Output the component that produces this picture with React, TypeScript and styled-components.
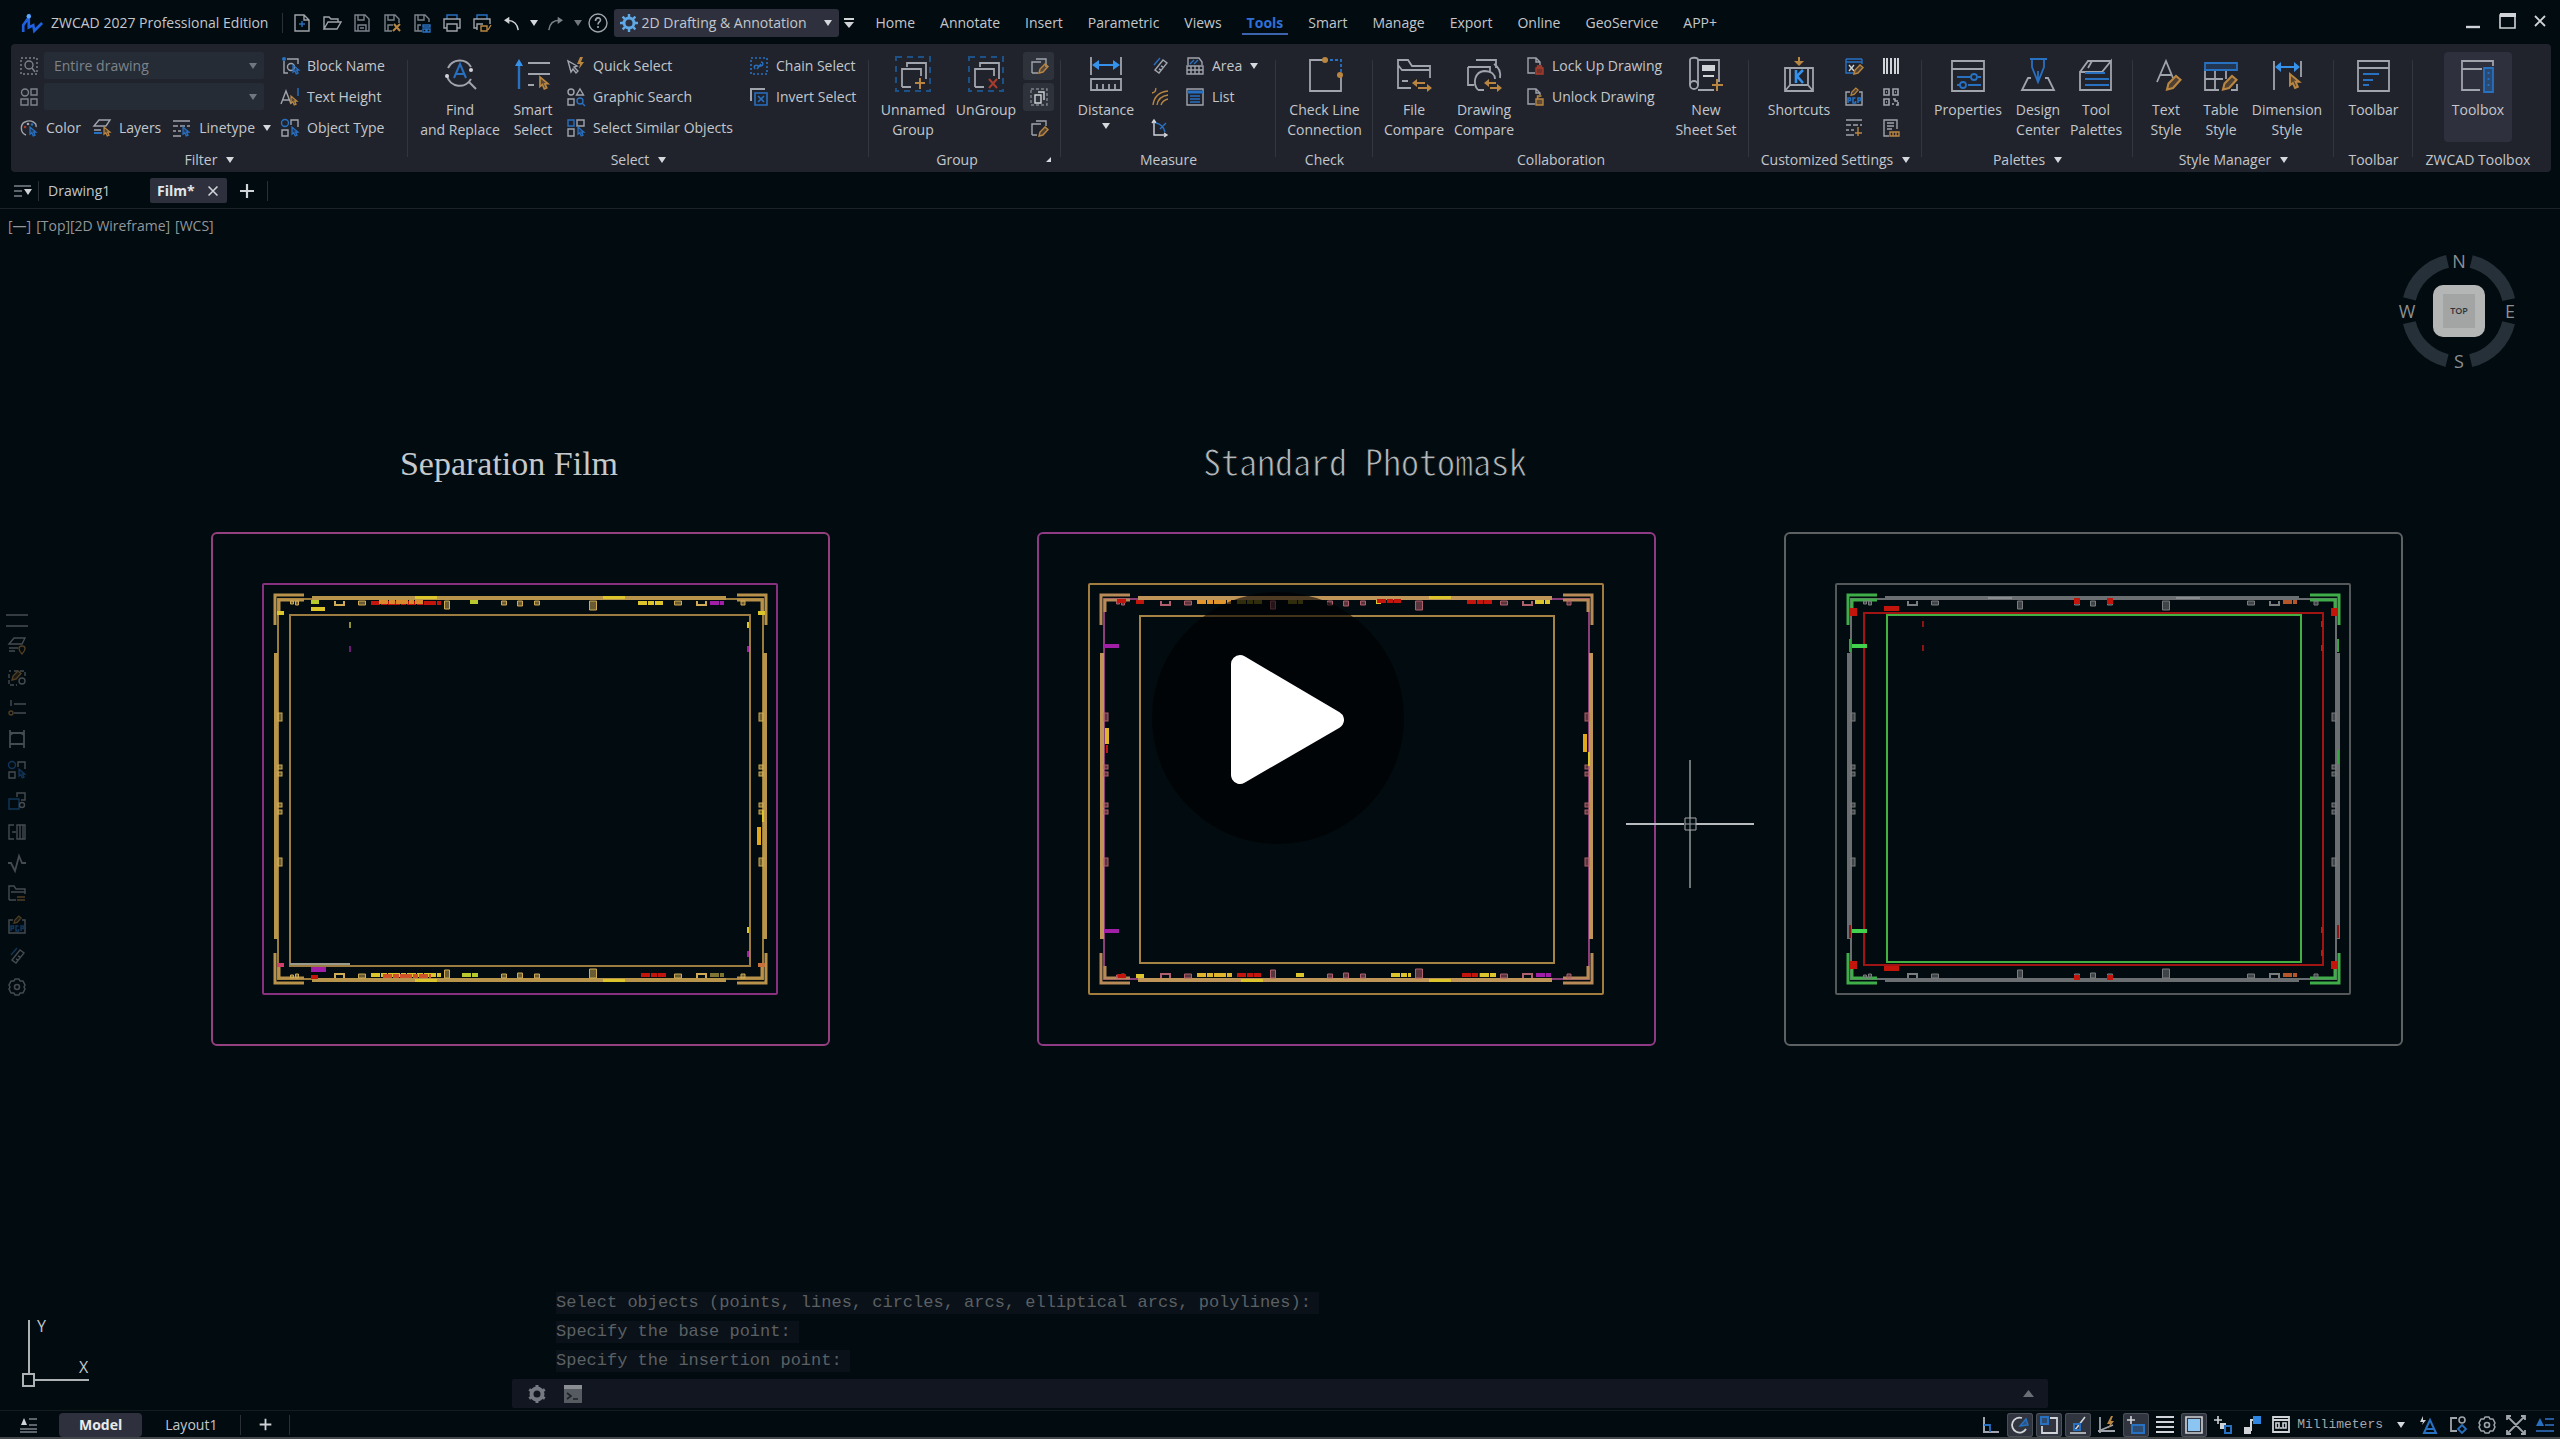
import React, { Fragment, ReactNode } from 'react';
import styled, { createGlobalStyle } from 'styled-components';

const G = '#a0a4ac';
const D = '#7d838b';
const B = '#2870c0';
const O = '#b98642';
const R = '#a83c2d';
const W = '#d0d3d7';

const Global = createGlobalStyle`
  * { box-sizing: border-box; }
  body { margin: 0; background: #020b0f; }
  button, select, input { font: inherit; color: inherit; }
  button { border: 0; background: none; padding: 0; cursor: pointer; }
`;

const App_ = styled.div`
  position: relative;
  display: flex;
  flex-direction: column;
  height: 100vh;
  overflow: hidden;
  background: #020b0f;
  color: #c3c7cd;
  font: 14px/20px 'Open Sans', 'Noto Sans', sans-serif;
  white-space: nowrap;
`;

/* ---------- icons ---------- */

const Svg = styled.svg<{ $s: number }>`
  display: block;
  flex: none;
  width: ${p => p.$s}px;
  height: ${p => p.$s}px;
  fill: none;
  stroke-width: 1.4;
  overflow: visible;
`;

const cursor = (x: number, y: number, c: string, k = 1) => (
  <path transform={`translate(${x} ${y}) scale(${k})`} d="M0 0v8l2-1.600 1.600 3.600 2-.9-1.600-3.500h2.600z" stroke={c} fill={c} fillOpacity=".35" />
);
const pencil = (x: number, y: number, c: string, k = 1) => (
  <path transform={`translate(${x} ${y}) scale(${k})`} d="M0 9l1-4 5-5 3 2.500-5 5.500z" stroke={c} fill={c} fillOpacity=".3" />
);

const small: Record<string, ReactNode> = {
  logo: (<><path d="M2 17V11l5-7v9l4-2 1 5 7-7" stroke="#1f62e0" strokeWidth="2.4" /><circle cx="7" cy="3" r="2" fill="#5aa8ff" /></>),
  file: (<><path d="M2 1h9l5 5v11H2zM11 1v5h5" stroke={G} /><path d="M9 7v6M6 10h6" stroke={B} /></>),
  open: (<path d="M1 15V3h5l2 2h7v3M1 15l4-7h13l-4 7z" stroke={G} />),
  save: (<path d="M2 1h10l4 4v12H2zM5 1v5h6V1M5 17v-6h8v6M7 14h4" stroke={D} />),
  saveas: (<><path d="M9 17H2V1h10l4 4v4M5 1v5h6V1M5 17v-6h5" stroke={D} /><path d="M10 17l7-7M11 10l6 7" stroke={O} strokeWidth="2" /></>),
  saveall: (<><path d="M9 17H2V1h10l4 4v3M5 1v5h6V1M5 17v-6h3" stroke={D} /><path d="M10 11h7v2h-7zM10 15h3v3h-3zM14 15h3v3h-3z" stroke={B} /></>),
  print: (<><path d="M4 5V1h10v4" stroke={B} /><path d="M4 14H1V5h16v9h-3M4 10h10v7H4z" stroke={G} /></>),
  preview: (<><path d="M4 5V1h10v4" stroke={B} /><path d="M4 14H1V5h16v5M4 16v-6h6" stroke={G} /><path d="M8 12h6v5H8zM15 16l3-5" stroke={O} /></>),
  undo: (<><path d="M4 6c7 0 11 4 12 11" stroke={W} strokeWidth="1.600" /><path d="M0 6l6-4v8z" fill={W} /></>),
  redo: (<><path d="M14 6C7 6 3 10 2 17" stroke={D} strokeWidth="1.600" /><path d="M18 6l-6-4v8z" fill={D} /></>),
  help: (<><circle cx="9" cy="9" r="9" stroke={G} /><path d="M6.500 7c0-4 5-4 5-1 0 2-2.500 2-2.500 4.500M9 12v2" stroke={G} strokeWidth="1.600" /></>),
  gearblue: (<><circle cx="9" cy="9" r="5" stroke="#5fa9e6" strokeWidth="3" /><path d="M9 0v4M9 14v4M0 9h4M14 9h4M2.600 2.600l3 3M12.400 12.400l3 3M2.600 15.400l3-3M12.400 5.600l3-3" stroke="#5fa9e6" strokeWidth="2.400" /></>),
  custom: (<><path d="M4 5h10" stroke={W} strokeWidth="2" /><path d="M4 8h10l-5 6z" fill={W} /></>),
  scan: (<><rect x="1" y="1" width="16" height="16" stroke={D} strokeDasharray="2 2" /><circle cx="9" cy="8" r="4" stroke={D} /><path d="M12 11l3 4" stroke={D} /></>),
  shapes: (<><circle cx="5" cy="4.500" r="3.500" stroke={D} /><path d="M11 1h6v6h-6zM1 11h7v6H1zM11 11h6v6h-6z" stroke={D} /></>),
  color: (<><path d="M6 16C0 14 0 5 5 3c6-3 12 1 11 5" stroke={G} /><circle cx="5" cy="8" r="1.300" fill={R} /><circle cx="8" cy="5" r="1.300" fill={G} /><circle cx="12" cy="5.500" r="1.300" fill={B} />{cursor(10, 8, B, .9)}</>),
  layers: (<><path d="M1 7l5-6h11l-4 6zM1 11h7" stroke={G} /><path d="M1 14h8" stroke={B} strokeWidth="2" />{cursor(11, 8, O, .9)}</>),
  linetype: (<><path d="M0 2h17M0 7h5m2 0h5m2 0h3M0 12h3m2 0h3M0 17h8" stroke={G} />{cursor(10, 8, B, .9)}</>),
  block: (<><path d="M3 4v12h4M6 2h11v5" stroke={G} /><circle cx="3" cy="2" r="2" fill={B} /><circle cx="10" cy="10" r="3.500" stroke={G} />{cursor(12, 8, B, .9)}</>),
  theight: (<><path d="M0 16L5 3l5 13M2 12h6" stroke={G} /><path d="M17 0v8" stroke={B} />{cursor(10, 8, O, .9)}</>),
  otype: (<><circle cx="4" cy="4" r="3.500" stroke={B} /><path d="M10 6V1h7v7M1 11h6v6H1z" stroke={G} />{cursor(11, 8, B, .9)}</>),
  quick: (<><path d="M1 4l3 11 2-3 3 4 2-2-4-4 3-1z" stroke={G} /><path d="M13 0l-3 7h3l-1 5 5-7h-3l2-5z" fill={O} /></>),
  gsearch: (<><circle cx="4" cy="4" r="3" stroke={G} /><path d="M13 1l3.500 6h-7zM1 11h6v6H1z" stroke={G} /><circle cx="13" cy="13" r="3" stroke={B} /><path d="M15 15l3 3" stroke={B} /></>),
  similar: (<><path d="M1 1h6v6H1z" stroke={B} /><path d="M10 1h7v6h-7zM1 10h6v7H1z" stroke={G} />{cursor(11, 8, B, .9)}</>),
  chain: (<><rect x="1" y="1" width="16" height="16" stroke={B} strokeDasharray="2 2" strokeWidth="1.600" /><path d="M5 12c-2-3 1-5 3-3l3 0c2 0 3-4 0-4M7 12l4-5" stroke={B} /></>),
  invert: (<><path d="M1 13V1h14" stroke={G} strokeWidth="2" /><path d="M5 5h12v12H5zM8 8l6 6M14 8l-6 6" stroke={B} strokeWidth="1.600" /></>),
  gsel1: (<><path d="M2 16V5h9M6 2h10v8M2 16h6" stroke={G} />{pencil(9, 7, O)}</>),
  gsel2: (<><rect x="1" y="1" width="16" height="16" stroke={D} strokeDasharray="3 2" /><path d="M5 7h6v8H5zM8 4h6v8" stroke={W} /></>),
  gsel3: (<><path d="M2 16V5h9M6 2h10v5M2 16h5" stroke={G} />{pencil(9, 8, O)}</>),
  measure: (<><path d="M4 13l8-10 4 3-8 10z" stroke={G} /><path d="M3 8l6-7" stroke={B} /><path d="M8 12l2 1M10 9l2 1" stroke={G} /></>),
  arcs: (<path d="M1 5c5-1 3-3 4-5M2 17C3 9 8 4 17 3M6 17c1-6 4-9 11-10M10 17c1-3 3-5 7-6" stroke={O} />),
  coord: (<><path d="M3 1v15h13M1 4l2-3 2 3M13 14l3 2-3 2" stroke={W} /><path d="M5 4c5 1 8 5 9 9M9 10l6-6" stroke={B} /></>),
  area: (<><path d="M2 8V1h11l3 4v3" stroke={G} /><path d="M4 7l4-4M8 7l4-4" stroke={B} /><path d="M1 9h16v8H1zM5 9v8M9 9v8M13 9v8M1 13h16" stroke={G} /></>),
  list: (<><path d="M1 1h16v16H1z" stroke={G} /><path d="M1 4h16" stroke={B} strokeWidth="3" /><path d="M4 8h10M4 11h10M4 14h10" stroke={B} /></>),
  lock: (<><path d="M9 16H2V1h8l4 4v3M10 1v4h4" stroke={G} /><path d="M10 11h7v6h-7zM11.500 11V9h4v2" stroke={R} fill={R} fillOpacity=".6" /></>),
  unlock: (<><path d="M9 16H2V1h8l4 4v2M10 1v4h4" stroke={G} /><path d="M10 11h7v6h-7zM11.500 11V8h4" stroke={O} fill={O} fillOpacity=".4" /></>),
  cx: (<><path d="M1 2h16M1 5h16v0M1 2v14h8M17 2v5" stroke={B} /><path d="M4 8l5 6M9 8l-5 6" stroke={W} />{pencil(9, 8, O)}</>),
  pgp: (<><path d="M5 4H1v13h16V4h-3" stroke={G} /><path d="M3 15v-5h2.500v2.500H3M10.500 10H8v5h2.500v-2M13 15v-5h2.500v2.500H13" stroke={B} strokeWidth="1.600" />{pencil(6, 0, O, .8)}</>),
  ltadd: (<><path d="M1 1h16M1 6h5m2 0h5m2 0h2M1 11h3m2 0h3M1 16h8" stroke={G} /><path d="M13 8v9M10 14h7" stroke={O} /></>),
  barcode: (<path d="M2 1v16M5 1v16M9 1v16M13 1v16M16 1v16" stroke={W} strokeWidth="2" />),
  qr: (<path d="M2 1h5v6H2zM11 1h5v6h-5zM2 11h5v6H2zM11 11h2v2h3M16 14v3h-2M11 17v-2M4 4h1M13 4h1M4 14h1" stroke={G} strokeWidth="1.600" />),
  doccode: (<><path d="M7 17H2V1h13v9M5 4h7M5 7h7M5 10h5" stroke={G} /><path d="M8 13h9v4H8zM11 13v4M14 13v4" stroke={O} /></>),
  tabs: (<><path d="M0 4h17M0 9h8M0 14h8" stroke={D} /><path d="M10 7h8l-4 6z" fill={W} /></>),
  plus: (<path d="M9 2v14M2 9h14" stroke={W} strokeWidth="2.200" />),
  x: (<path d="M4 4l10 10M14 4L4 14" stroke={W} strokeWidth="1.800" />),
  min: (<path d="M2 15h14" stroke={W} strokeWidth="2.400" />),
  max: (<><path d="M2 3h15v13H2z" stroke={W} strokeWidth="1.600" /><path d="M2 3h16" stroke={W} strokeWidth="4" /></>),
  gear: (<><circle cx="9" cy="9" r="5.500" stroke={G} strokeWidth="4" /><path d="M9 0v3M9 15v3M1.200 4.500l2.600 1.500M14.200 12l2.600 1.500M1.200 13.500l2.600-1.500M14.200 6l2.600-1.500" stroke={G} strokeWidth="3" /></>),
  hex: (<><path d="M7 1h4l1 2 3 0 2 4-1 2 1 2-2 4-3 0-1 2H7l-1-2-3 0-2-4 1-2-1-2 2-4 3 0z" stroke={G} strokeLinejoin="round" strokeWidth="1.600" /><circle cx="9" cy="9" r="2.500" stroke={G} strokeWidth="1.600" /></>),
  prompt: (<><path d="M0 0h18v18H0z" fill="#565b62" /><path d="M0 2h18" stroke="#8a8e93" strokeWidth="4" /><path d="M3 8l4 3-4 3M9 14h5" stroke="#1c2128" strokeWidth="1.600" /></>),
  lay: (<><path d="M1 7l5-6h11l-3 6zM1 11h9M1 14h6" stroke={G} /><path d="M14 9c4 0 4 4 0 8-4-4-4-8 0-8z" stroke={O} /></>),
  edit: (<><path d="M1 3h2M6 3h11v7M1 6v11h8" stroke={G} strokeDasharray="4 2" /><circle cx="14" cy="13" r="3" stroke={G} />{pencil(4, 3, O)}</>),
  tree: (<><path d="M3 1v6M6 5h12M6 14h12" stroke={G} /><circle cx="3" cy="14" r="2" stroke={O} /></>),
  dim: (<path d="M2 0v18M16 0v18M2 3h14M2 14h14M2 5l3-2M16 5l-3-2" stroke={G} strokeWidth="1.800" />),
  copy: (<><path d="M1 7h10v10H1z" stroke={B} /><path d="M9 5V1h8v7h-4" stroke={G} /><circle cx="14" cy="13" r="2.500" stroke={G} /></>),
  col: (<path d="M6 2H1v14h5M4 9h4M9 2h8v14H9zM12 2v14M15 2v14" stroke={G} />),
  wave: (<path d="M0 9h3l4 8 4-15 3 7h4" stroke={G} strokeWidth="1.800" />),
  folder: (<><path d="M1 15V1h5l2 3h9v5M1 15h7M3 7h14" stroke={G} /><path d="M9 12h8M9 15h8" stroke={O} /></>),
  ortho: (<><path d="M2 1v15h15" stroke={G} strokeWidth="2" /><path d="M2 9h6v7" stroke={B} strokeWidth="1.800" /></>),
  polar: (<><path d="M15 13a7.500 7.500 0 1 1-4-11" stroke={W} strokeWidth="1.800" /><path d="M9 10l6-7 2 6z" stroke={B} fill={B} fillOpacity=".5" /></>),
  osnap: (<><path d="M10 2h7v15H2V10" stroke={W} strokeWidth="1.800" /><path d="M1 1h7v7H1z" stroke={B} fill={B} fillOpacity=".4" strokeWidth="2" /></>),
  otrack: (<><path d="M1 17h16M6 14L16 1" stroke={W} strokeWidth="1.600" /><path d="M5 8h6v6H5z" stroke={B} strokeWidth="2" /></>),
  ducs: (<><path d="M2 1v16M0 15h17M3 14l12-5" stroke={G} strokeWidth="1.800" /><path d="M13 0L9 8h3l-2 5 6-8h-3l2-5z" fill={O} /></>),
  dyn: (<><path d="M4 0v8M0 4h8" stroke={W} strokeWidth="1.600" /><path d="M5 9h12v8H5z" stroke={B} fill={B} fillOpacity=".4" strokeWidth="2" /></>),
  lwt: (<path d="M0 1h18M0 6h18M0 11h18M0 16h18" stroke={W} strokeWidth="2.200" />),
  transp: (<><path d="M1 1h16v16H1z" stroke={W} strokeWidth="1.600" /><path d="M3 3h12v12H3z" fill="#8cc4f2" /></>),
  cycle: (<><path d="M4 0v8M0 4h8" stroke={W} strokeWidth="1.600" /><path d="M6 7h6v6H6z" fill={W} /><path d="M11 10h6v7h-6z" stroke={B} fill="#020b0f" strokeWidth="2" /></>),
  note: (<><path d="M1 11h7v7H1z" fill={W} /><path d="M8 15V4h3" stroke={W} strokeWidth="2" /><path d="M10 0h8v8h-8z" fill="#2f86e0" /></>),
  units: (<><path d="M1 1h16v15H1zM1 4h16" stroke={W} strokeWidth="1.800" /><path d="M4 7h3v5H4zM11 7h3v5h-3zM9 11v2" stroke={W} strokeWidth="1.600" /></>),
  anno: (<><path d="M4 17l6-13 6 13zM6 13h8" stroke={B} strokeWidth="2" /><path d="M3 0L0 6h3l-1 3 4-5H3z" fill={W} /></>),
  tree2: (<><path d="M8 2H2v13h6" stroke={G} strokeWidth="1.800" /><circle cx="13" cy="4" r="3" stroke={G} strokeWidth="1.600" /><path d="M13 9l4 4-4 4-4-4z" stroke={B} strokeWidth="1.800" /></>),
  full: (<path d="M1 1l16 16M17 1L1 17M0 4V0h4M14 0h4v4M0 14v4h4M14 18h4v-4" stroke={G} strokeWidth="1.800" />),
  ann2: (<><path d="M0 10h8L4 2z" fill={B} /><path d="M9 3h9M9 9h9M0 15h18" stroke="#265a9a" strokeWidth="2" /></>),
  lines: (<><path d="M1 9h6L4 2z" fill={W} /><path d="M9 3h8M9 9h8M0 13h17M0 16h17" stroke={D} /></>),
};

const big: Record<string, ReactNode> = {
  find: (<><path d="M6 12a13 13 0 0 1 23-1M29 23a13 13 0 0 1-24-3M27 26l7 7" stroke={G} strokeWidth="2" /><path d="M12 22l6-14 6 14M14 18h8" stroke={B} strokeWidth="2" /><circle cx="5" cy="20" r="2" fill={W} /><circle cx="29" cy="14" r="2" fill={W} /></>),
  smart: (<><path d="M4 8v25" stroke={B} strokeWidth="2.400" /><path d="M0 10l4-7 4 7z" fill="#3591ea" /><path d="M13 7h22M13 18h22M13 29h6" stroke={G} strokeWidth="1.800" />{cursor(25, 21, O, 1.2)}</>),
  group: (<><rect x="1" y="1" width="34" height="34" stroke="#1c5288" strokeWidth="2" strokeDasharray="6 5" /><path d="M7 31V13h19v7M12 11V7h19v16M7 31h9" stroke={G} strokeWidth="1.800" /><path d="M25 22v11M20 27h10" stroke={O} strokeWidth="2" /></>),
  ungroup: (<><rect x="1" y="1" width="34" height="34" stroke="#1c5288" strokeWidth="2" strokeDasharray="6 5" /><path d="M7 31V13h19v7M12 11V7h19v16M7 31h9" stroke={G} strokeWidth="1.800" /><path d="M21 23l8 9M29 23l-8 9" stroke={R} strokeWidth="2" /></>),
  distance: (<><path d="M3 1v18M33 1v18M3 23h30v11H3zM9 28v6M15 28v6M21 28v6M27 28v6" stroke={G} strokeWidth="1.800" /><path d="M9 9h18" stroke="#3591ea" strokeWidth="2" /><path d="M4 9l7-5v10zM32 9l-7-5v10z" fill="#3591ea" /></>),
  check: (<><path d="M18 4H3v31h31V18" stroke={G} strokeWidth="1.800" /><path d="M18 4h16v12" stroke={B} strokeWidth="1.800" strokeDasharray="3 2" /><circle cx="18" cy="4" r="3" fill={O} /><circle cx="33" cy="19" r="3" fill={O} /></>),
  fcompare: (<><path d="M15 32H2V4h10l4 6h18v12M2 9l4 5h28M6 25h6" stroke={G} strokeWidth="1.800" /><path d="M16 27l5-4v8zM36 32l-5-4v8z" fill={O} /><path d="M20 27h9M22 32h10" stroke={O} strokeWidth="2" /></>),
  dcompare: (<><path d="M10 4h20v8M2 11h22v5M2 11v18h6M28 8a14 14 0 0 1 6 14M12 34C6 27 9 16 18 15c8 0 11 4 11 8M12 34h6" stroke={G} strokeWidth="1.800" /><path d="M18 27l5-4v8zM36 32l-5-4v8z" fill={O} /><path d="M22 27h8M24 32h8" stroke={O} strokeWidth="2" /></>),
  sheet: (<><circle cx="6" cy="29" r="4" stroke={G} strokeWidth="1.800" /><path d="M2 29V4c0-3 8-3 8 0v25M10 4h21v22M10 34h16" stroke={G} strokeWidth="1.800" /><path d="M14 9h13v6H14z" fill={W} /><path d="M15 20h11" stroke={W} strokeWidth="2" /><path d="M29 23v12M24 29h11" stroke={O} strokeWidth="2" /></>),
  keycap: (<><path d="M4 12h28v23H4zM4 35l5-6M32 35l-5-6M9 12v17h18V12" stroke={G} strokeWidth="1.800" /><path d="M18 1v7" stroke={O} strokeWidth="2" /><path d="M13 5h10l-5 5z" fill={O} /><path d="M15 14v13M22 14l-6 6 6 7" stroke="#3591ea" strokeWidth="2.600" /></>),
  props: (<><path d="M2 5h32v30H2zM2 13h32" stroke={G} strokeWidth="1.800" /><path d="M7 21h14M28 21h3M7 29h3M18 29h13" stroke={B} strokeWidth="2" /><circle cx="24" cy="21" r="3" stroke={B} strokeWidth="1.800" /><circle cx="13" cy="29" r="3" stroke={B} strokeWidth="1.800" /></>),
  design: (<><path d="M11 22H8L2 34h32l-6-12h-3" stroke={G} strokeWidth="1.800" /><path d="M10 3h17M12 4v7l6 15 6-15V4M18 15v11" stroke={B} strokeWidth="1.800" /></>),
  palettes: (<><path d="M2 16h22l9-11v29H2zM2 16l8-11h23M10 12l4-7" stroke={G} strokeWidth="1.800" /><path d="M7 17h20M7 23h24M7 29h24" stroke={B} strokeWidth="2" /></>),
  tstyle: (<><path d="M9 26l9-21 7 17M12 19h11" stroke={G} strokeWidth="1.800" />{pencil(19, 20, O, 1.5)}</>),
  ttable: (<><path d="M2 13v21h14M2 23h18M12 13v21M23 13v10M34 28v6h-6" stroke={G} strokeWidth="1.800" /><path d="M2 7h32v7H2z" stroke={B} fill={B} fillOpacity=".25" strokeWidth="1.800" />{pencil(20, 20, O, 1.5)}</>),
  tdim: (<><path d="M5 5v29M32 5v16" stroke={G} strokeWidth="1.800" /><path d="M10 11h16" stroke="#3591ea" strokeWidth="2" /><path d="M6 11l6-5v10zM31 11l-6-5v10z" fill="#3591ea" />{cursor(21, 18, O, 1.4)}</>),
  toolbar: (<><path d="M2 5h31v30H2zM2 12h31" stroke={G} strokeWidth="1.800" /><path d="M7 18h16M7 24h10M7 29h6" stroke={B} strokeWidth="2" /></>),
  toolbox: (<><path d="M20 34H2V5h31v5M2 13h20" stroke={G} strokeWidth="1.800" /><path d="M24 12h9v24h-9zM28.500 16v2M28.500 22v2M28.500 28v2" stroke={B} fill={B} fillOpacity=".4" strokeWidth="1.800" /></>),
};

const Icon = ({ n, s = 18 }: { n: string; s?: number }) => (
  <Svg $s={s} viewBox="0 0 18 18" aria-hidden="true">{small[n]}</Svg>
);
const BigIcon = ({ n }: { n: string }) => (
  <Svg $s={36} viewBox="0 0 36 36" aria-hidden="true">{big[n]}</Svg>
);

const CaretSvg = styled.svg<{ $dim?: boolean; $over?: boolean }>`
  display: block;
  flex: none;
  width: 8px;
  height: 6px;
  fill: ${p => (p.$dim ? '#72777f' : '#d5d8dc')};
  pointer-events: none;
  ${p => p.$over && 'position: absolute; right: 7px; top: 50%; margin-top: -3px;'}
`;
const Caret = (p: { dim?: boolean; over?: boolean }) => (
  <CaretSvg $dim={p.dim} $over={p.over} viewBox="0 0 8 6" aria-hidden="true"><path d="M0 0h8L4 6z" /></CaretSvg>
);

/* ---------- title bar ---------- */

const TitleBar = styled.header`
  display: flex;
  align-items: center;
  flex: none;
  height: 44px;
  padding: 2px 4px 0 21px;
`;
const Product = styled.h1`
  margin: 0 14px 0 10px;
  font-size: 14px;
  font-weight: 400;
`;
const Rule = styled.i<{ $h?: number }>`
  flex: none;
  width: 1px;
  height: ${p => p.$h ?? 20}px;
  background: #2a3036;
`;
const ToolButton = styled.button<{ $w?: number }>`
  display: grid;
  place-items: center;
  flex: none;
  width: ${p => p.$w ?? 30}px;
  height: 28px;
`;
const Quick = styled.div`
  display: flex;
  align-items: center;
  margin-left: 4px;
`;
const Workspace = styled.label`
  position: relative;
  display: flex;
  align-items: center;
  width: 225px;
  height: 28px;
  margin-left: 5px;
  padding-left: 6px;
  border-radius: 3px;
  background: #2e313d;
  select {
    flex: 1;
    height: 28px;
    padding: 0 20px 0 3px;
    border: 0;
    appearance: none;
    background: none;
  }
`;
const Nav = styled.nav`
  display: flex;
  gap: 15px;
  margin-left: 11px;
`;
const NavLink = styled.a<{ $on?: boolean }>`
  padding: 2px 5px 0;
  border-bottom: 2px solid ${p => (p.$on ? '#3c63ae' : 'transparent')};
  color: ${p => (p.$on ? '#2f6fd8' : 'inherit')};
  font-weight: ${p => (p.$on ? 700 : 400)};
  text-decoration: none;
`;
const WindowControls = styled.div`
  display: flex;
  margin: -4px 0 0 auto;
`;

/* ---------- ribbon ---------- */

const Ribbon = styled.section`
  display: grid;
  grid-template-columns: 397fr 461fr 192fr 215fr 97fr 376fr 173fr 211fr 201fr 79fr 138fr;
  flex: none;
  height: 128px;
  margin: 0 9px 0 11px;
  border-radius: 4px;
  background: #20232c;
`;
const PanelBox = styled.div`
  position: relative;
  display: flex;
  flex-direction: column;
  min-width: 0;
  padding-top: 6px;
  &:last-child { padding-right: 8px; }
  &:not(:last-child)::after {
    content: '';
    position: absolute;
    right: 0;
    top: 16px;
    bottom: 15px;
    width: 1px;
    background: #31353e;
  }
`;
const PanelBody = styled.div<{ $pad?: number; $center?: boolean }>`
  display: flex;
  height: 100px;
  padding-left: ${p => p.$pad ?? 0}px;
  justify-content: ${p => (p.$center ? 'center' : 'flex-start')};
`;
const PanelTitle = styled.button<{ $launcher?: boolean }>`
  display: flex;
  align-items: center;
  justify-content: center;
  gap: 9px;
  height: 20px;
  padding-right: ${p => (p.$launcher ? 16 : 0)}px;
`;
const Launcher = styled.svg`
  position: absolute;
  right: 10px;
  bottom: 10px;
  width: 5px;
  height: 5px;
  fill: #d5d8dc;
`;
const Panel = (p: { title: string; pad?: number; center?: boolean; caret?: boolean; launcher?: boolean; children: ReactNode }) => (
  <PanelBox>
    <PanelBody $pad={p.pad} $center={p.center}>{p.children}</PanelBody>
    <PanelTitle $launcher={p.launcher}>{p.title}{p.caret && <Caret />}</PanelTitle>
    {p.launcher && <Launcher viewBox="0 0 5 5"><path d="M5 0v5H0z" /></Launcher>}
  </PanelBox>
);

const BigBtn = styled.button<{ $w: number; $on?: boolean }>`
  display: flex;
  flex-direction: column;
  align-items: center;
  flex: none;
  width: ${p => p.$w}px;
  height: 90px;
  margin-top: 2px;
  padding-top: 4px;
  border-radius: 4px;
  background: ${p => (p.$on ? '#2e313d' : 'none')};
  span { padding-top: 8px; }
`;
const DropMark = styled.i`
  padding-top: 3px;
`;
const Big = ({ n, w, a, b, on, caret }: { n: string; w: number; a: string; b?: string; on?: boolean; caret?: boolean }) => (
  <BigBtn $w={w} $on={on}>
    <BigIcon n={n} />
    <span>{a}{b && <><br />{b}</>}</span>
    {caret && <DropMark><Caret /></DropMark>}
  </BigBtn>
);

const Col = styled.div<{ $w?: number; $ml?: number }>`
  display: flex;
  flex-direction: column;
  flex: none;
  width: ${p => (p.$w ? p.$w + 'px' : 'auto')};
  margin-left: ${p => p.$ml ?? 0}px;
`;
const Row = styled.div<{ $gap?: number }>`
  display: flex;
  align-items: center;
  gap: ${p => p.$gap ?? 0}px;
  height: 31px;
`;
const SmallBtn = styled.button`
  display: flex;
  align-items: center;
  gap: 8px;
  height: 31px;
`;
const IconBtn = styled.button<{ $on?: boolean }>`
  display: grid;
  place-items: center;
  width: 31px;
  height: 28px;
  margin: 2px auto 1px;
  border-radius: 3px;
  background: ${p => (p.$on ? '#2d323b' : 'none')};
`;
const Small = ({ n, t, caret }: { n: string; t: string; caret?: boolean }) => (
  <SmallBtn><Icon n={n} />{t}{caret && <Caret />}</SmallBtn>
);
const Field = styled.label`
  position: relative;
  display: block;
  select {
    display: block;
    width: 220px;
    height: 27px;
    padding: 0 10px;
    border: 0;
    border-radius: 2px;
    appearance: none;
    background: #262c35;
    color: #7d838b;
  }
`;

/* ---------- document tabs ---------- */

const DocTabs = styled.div`
  display: flex;
  align-items: center;
  flex: none;
  height: 37px;
  padding: 1px 0 0 14px;
  border-bottom: 1px solid #1d2327;
`;
const DocTab = styled.button<{ $on?: boolean }>`
  display: flex;
  align-items: center;
  justify-content: space-between;
  width: ${p => (p.$on ? 77 : 102)}px;
  height: 25px;
  margin-left: ${p => (p.$on ? 3 : 0)}px;
  padding: 0 6px 0 ${p => (p.$on ? 7 : 3)}px;
  border-radius: 2px;
  background: ${p => (p.$on ? '#2e313d' : 'none')};
  color: ${p => (p.$on ? '#e3e5e8' : 'inherit')};
  font-weight: ${p => (p.$on ? 700 : 400)};
`;

/* ---------- drawing area ---------- */

const Canvas = styled.main`
  position: relative;
  flex: 1;
  min-height: 0;
`;
const Scene = styled.svg`
  position: absolute;
  inset: 0;
  width: 100%;
  height: 100%;
  fill: none;
`;
const ViewLabels = styled.div`
  position: relative;
  display: flex;
  gap: 5px;
  padding: 7px 8px;
  color: #92979b;
`;
const SideBar = styled.div`
  position: absolute;
  left: 6px;
  top: 405px;
  display: flex;
  flex-direction: column;
  align-items: center;
  width: 22px;
  padding-top: 16px;
  opacity: 0.42;
  button { height: 31px; display: grid; place-items: center; }
  &::before {
    content: '';
    position: absolute;
    top: 0;
    width: 22px;
    height: 9px;
    border: solid ${D};
    border-width: 2px 0;
  }
`;
const Compass = styled.svg`
  position: absolute;
  right: 36px;
  top: 37px;
  width: 130px;
  height: 130px;
  fill: none;
  font: 18px 'Open Sans', sans-serif;
  text-anchor: middle;
`;
const CommandWindow = styled.section`
  position: absolute;
  left: 20%;
  right: 20%;
  bottom: 2px;
`;
const History = styled.div`
  display: flex;
  flex-direction: column;
  align-items: flex-start;
  gap: 7px;
  padding: 0 0 7px 44px;
  color: #5b6064;
  font: 17px/22px 'Liberation Mono', monospace;
  span { padding-right: 8px; background: #0a1118; }
`;
const CommandLine = styled.label`
  display: flex;
  align-items: center;
  gap: 18px;
  height: 29px;
  padding: 0 14px 0 16px;
  border-radius: 2px;
  background: #111620;
  input { flex: 1; border: 0; outline: 0; background: none; }
`;
const UpMark = styled.svg`
  width: 11px;
  height: 7px;
  fill: #6a6f75;
`;
const Dimmed = styled.span`
  opacity: 0.7;
`;
const PlayButton = styled.button`
  position: absolute;
  left: 50%;
  top: 50%;
  width: 252px;
  height: 252px;
  margin: -128px 0 0 -128px;
  border-radius: 50%;
  background: rgba(0, 0, 0, 0.6);
  svg { display: block; width: 252px; height: 252px; }
`;

/* ---------- status bar ---------- */

const StatusBar = styled.footer`
  display: flex;
  align-items: center;
  flex: none;
  height: 29px;
  padding: 1px 2px 0 20px;
  border-top: 1px solid #151c20;
  border-bottom: 2px solid #44484b;
`;
const LayoutTab = styled.button<{ $on?: boolean }>`
  height: 24px;
  padding: 0 ${p => (p.$on ? 20 : 23)}px;
  border-radius: 4px;
  background: ${p => (p.$on ? '#2e313d' : 'none')};
  color: ${p => (p.$on ? '#e8eaec' : 'inherit')};
  font-weight: ${p => (p.$on ? 700 : 400)};
`;
const LayoutTabs = styled.div`
  display: flex;
  align-items: center;
  margin-left: 21px;
`;
const Modes = styled.div`
  display: flex;
  align-items: center;
  gap: 3px;
  margin-left: auto;
`;
const Mode = styled.button<{ $on?: boolean }>`
  display: grid;
  place-items: center;
  width: 26px;
  height: 24px;
  border-radius: 3px;
  background: ${p => (p.$on ? '#30343f' : 'none')};
  box-shadow: ${p => (p.$on ? 'inset 0 0 0 1px #4b4f58' : 'none')};
`;
const Units = styled.button`
  display: flex;
  align-items: center;
  gap: 14px;
  margin-right: 8px;
  color: #a3a7ab;
  font: 13px/20px 'Liberation Mono', monospace;
`;

/* ---------- drawing content ---------- */

type Mark = [number, number, number, string];
type PlateSpec = {
  x: number; outer: string; mid: string; frame: string; bar: string; corner: string; node: string; inner: string;
  innerBox: [number, number, number, number];
  marks: Mark[]; ticks: Mark[]; blocks: [number, number, number, number, string][];
};

/* [offset along the edge, width, depth] of the fixtures on the long edges */
const edgeNodes: [number, number, number][] = [
  [14, 3, 3], [19, 3, 4], [84, 7, 4], [169, 5, 8], [226, 5, 4], [242, 5, 5], [259, 5, 4], [315, 7, 9], [400, 7, 4], [465, 4, 4],
];
const sideNodes = [717, 767, 774, 805, 812, 862];

const Plate = ({ p }: { p: PlateSpec }) => {
  const [ix, iy, iw, ih] = p.innerBox;
  return (
    <g transform={`translate(${p.x} 0)`}>
      <rect x="-66" y="533" width="617" height="512" rx="5" stroke={p.outer} strokeWidth="2" />
      <rect x="-15" y="584" width="514" height="410" rx="1" stroke={p.mid} strokeWidth="2" />
      <rect x="0" y="599" width="485" height="380" stroke={p.frame} strokeWidth="2" />
      <path d="M34 598h414M34 980h414M-2 653v286M487 653v286" stroke={p.bar} strokeWidth="4" />
      <path d="M-3 625V595H26M1 612V600H26M459 595h29v30M459 600h25v12M-3 953v30H26M1 966v12H26M459 983h29v-30M459 978h25v-12" stroke={p.corner} strokeWidth="3" />
      {edgeNodes.map(([x, w, h]) => (
        <Fragment key={x}>
          <path d={`M${x - w / 2} 601h${w}v${h}h${-w}z`} fill={p.node} fillOpacity=".5" stroke={p.node} strokeWidth="1" />
          <path d={`M${x - w / 2} 978h${w}v${-h}h${-w}z`} fill={p.node} fillOpacity=".5" stroke={p.node} strokeWidth="1" />
        </Fragment>
      ))}
      <path d="M57 601v4h9v-4M419 601v4h9v-4M57 978v-4h9v4M419 978v-4h9v4" stroke={p.node} strokeWidth="2" />
      {sideNodes.map((y, i) => {
        const h = i === 0 || i === 5 ? 8 : 4;
        return (
          <Fragment key={y}>
            <rect x="0" y={y - h / 2} width="4" height={h} fill={p.node} fillOpacity=".5" stroke={p.node} strokeWidth="1" />
            <rect x="481" y={y - h / 2} width="4" height={h} fill={p.node} fillOpacity=".5" stroke={p.node} strokeWidth="1" />
          </Fragment>
        );
      })}
      <rect x={ix} y={iy} width={iw} height={ih} stroke={p.inner} strokeWidth="2" />
      {p.blocks.map(([x, y, w, h, c], i) => <rect key={i} x={x} y={y} width={w} height={h} fill={c} />)}
      {p.marks.map(([x, y, w, c], i) => (
        <path key={i} d={`M${x} ${y}h${w}`} stroke={c} strokeWidth="4" strokeDasharray="9 1 6 1 12 1 5 1" />
      ))}
      {p.ticks.map(([x, y, h, c], i) => <path key={i} d={`M${x} ${y}v${h}`} stroke={c} strokeWidth={h > 14 ? 4 : 2} />)}
    </g>
  );
};

const Y = '#dcc52c';
const M = '#a01fa6';
const RR = '#c4150c';
const plates: PlateSpec[] = [
  {
    x: 278, outer: '#94407f', mid: '#86307f', frame: '#9a7c3c', bar: '#b8954a', corner: '#b8924a', node: '#cfab55', inner: '#9c7c40',
    innerBox: [12, 615, 460, 351],
    marks: [[93, 603, 70, RR], [101, 602, 44, '#d98a2c'], [192, 602, 8, '#b9c92c'], [360, 603, 25, Y], [432, 603, 14, M], [93, 975, 70, Y], [105, 976, 48, '#d0522a'], [184, 975, 16, '#b9c92c'], [363, 975, 25, RR], [432, 975, 14, '#7f7434'], [-1, 613, 7, Y], [480, 613, 7, Y], [-1, 965, 7, '#d0406a'], [480, 965, 7, '#c8703a'], [33, 602, 8, '#b9c92c']],
    ticks: [[72, 622, 6, '#8f9132'], [72, 646, 6, '#6d1a76'], [470, 622, 6, Y], [470, 646, 6, M], [470, 927, 6, Y], [470, 951, 6, M], [481, 827, 18, '#e0a91c'], [485, 810, 12, Y]],
    blocks: [[33, 607, 14, 4, Y], [33, 967, 15, 5, M], [33, 975, 7, 4, RR], [137, 596, 22, 3, Y], [325, 596, 22, 3, Y], [137, 979, 22, 3, Y], [325, 979, 22, 3, Y], [12, 963, 60, 2, '#9a9a8c']],
  },
  {
    x: 1104, outer: '#8e3a85', mid: '#a07c3f', frame: '#8a3e78', bar: '#c09558', corner: '#b88a58', node: '#b0606c', inner: '#a58344',
    innerBox: [36, 616, 414, 347],
    marks: [[13, 601, 9, RR], [32, 602, 8, RR], [93, 602, 34, '#e0962c'], [133, 602, 25, '#77701f'], [184, 602, 15, '#77701f'], [273, 601, 24, RR], [363, 602, 25, RR], [431, 602, 15, Y], [14, 976, 8, RR], [32, 976, 8, Y], [93, 975, 36, '#e0b32c'], [133, 975, 24, RR], [192, 975, 8, Y], [287, 975, 20, Y], [358, 975, 18, RR], [376, 975, 16, Y], [432, 975, 15, M]],
    ticks: [[3, 728, 16, '#e0b32c'], [3, 745, 8, RR], [481, 734, 18, '#e0a91c'], [485, 752, 14, Y]],
    blocks: [[0, 644, 15, 4, M], [0, 929, 15, 4, M], [137, 979, 22, 3, Y], [325, 596, 22, 3, Y], [325, 979, 22, 3, Y], [272, 600, 5, 4, Y]],
  },
  {
    x: 1851, outer: '#5d6164', mid: '#54585b', frame: '#6b6e70', bar: '#6c6f71', corner: '#3fae49', node: '#7a7d7f', inner: '#a01414',
    innerBox: [13, 613, 459, 352],
    marks: [[432, 602, 14, '#b4562a'], [432, 975, 14, '#b4562a']],
    ticks: [[72, 621, 6, '#8c1414'], [72, 645, 6, '#8c1414'], [471, 621, 6, RR], [471, 645, 6, RR], [471, 927, 6, RR], [471, 950, 6, RR], [487, 639, 13, '#35a53f'], [-1, 639, 13, '#35a53f'], [487, 750, 14, '#35a53f'], [-1, 925, 13, '#8c1414'], [487, 925, 13, '#8c1414']],
    blocks: [[1, 644, 15, 4, '#42d24d'], [1, 929, 15, 4, '#42d24d'], [33, 606, 15, 5, RR], [33, 966, 15, 5, RR], [-1, 608, 7, 8, RR], [480, 608, 7, 8, RR], [-1, 961, 7, 8, RR], [480, 961, 7, 8, RR], [223, 598, 6, 6, RR], [256, 598, 6, 6, RR], [223, 975, 6, 5, RR], [256, 975, 6, 5, RR], [137, 597, 24, 2, '#8b8e90'], [325, 597, 24, 2, '#8b8e90']],
  },
];

const ModelText = styled.text<{ $mono?: boolean }>`
  fill: ${p => (p.$mono ? '#b4b8ba' : '#c6c9cb')};
  font: ${p => (p.$mono ? "300 36px 'Noto Sans Mono CJK SC', 'Liberation Mono', monospace" : "34px 'Liberation Serif', serif")};
  stroke: #020b0f;
  stroke-width: ${p => (p.$mono ? 1 : 0)}px;
  text-anchor: middle;
`;
const AxisText = styled.text`
  fill: #c3c7cb;
  font: 16px 'Open Sans', sans-serif;
`;

const Model = () => (
  <Scene viewBox="0 209 2560 1201" preserveAspectRatio="xMidYMid meet">
    <ModelText x="509" y="475">Separation Film</ModelText>
    <ModelText x="1365" y="476" $mono>Standard Photomask</ModelText>
    {plates.map(p => <Plate key={p.x} p={p} />)}
    <rect x="1887" y="615" width="414" height="347" stroke="#43b043" strokeWidth="2" />
    <path d="M1626 824h58M1696 824h58" stroke="#b9bcbe" strokeWidth="2" />
    <path d="M1690 760v58M1690 830v58" stroke="#6f7477" strokeWidth="2" />
    <path d="M1685 818h11v12h-11zM1685 824h11M1690 818v12" stroke="#a4a8aa" />
    <path d="M29 1320v54M35 1380h54M23 1374h11v12H23z" stroke="#aeb2b5" strokeWidth="2" />
    <AxisText x="37" y="1332">Y</AxisText>
    <AxisText x="79" y="1373">X</AxisText>
  </Scene>
);

/* ---------- page ---------- */

const menus = ['Home', 'Annotate', 'Insert', 'Parametric', 'Views', 'Tools', 'Smart', 'Manage', 'Export', 'Online', 'GeoService', 'APP+'];
const quickTools = ['file', 'open', 'save', 'saveas', 'saveall', 'print', 'preview', 'undo'];
const sideTools = ['lay', 'edit', 'tree', 'dim', 'otype', 'copy', 'col', 'wave', 'folder', 'pgp', 'measure', 'hex'];
const modes: [string, boolean][] = [['ortho', false], ['polar', true], ['osnap', true], ['otrack', true], ['ducs', false], ['dyn', true], ['lwt', false], ['transp', true], ['cycle', false], ['note', false]];

export default function App() {
  return (
    <App_>
      <Global />
      <TitleBar>
        <Icon n="logo" s={20} />
        <Product>ZWCAD 2027 Professional Edition</Product>
        <Rule />
        <Quick>
          {quickTools.map(n => <ToolButton key={n} aria-label={n}><Icon n={n} s={n === 'undo' ? 16 : 18} /></ToolButton>)}
          <ToolButton $w={14} aria-label="undo list"><Caret /></ToolButton>
          <ToolButton $w={28} aria-label="redo"><Icon n="redo" s={16} /></ToolButton>
          <ToolButton $w={18} aria-label="redo list"><Caret dim /></ToolButton>
          <ToolButton $w={22} aria-label="help"><Icon n="help" /></ToolButton>
        </Quick>
        <Workspace>
          <Icon n="gearblue" />
          <select aria-label="Workspace"><option>2D Drafting &amp; Annotation</option></select>
          <Caret over />
        </Workspace>
        <ToolButton $w={20} aria-label="customize"><Icon n="custom" /></ToolButton>
        <Nav>
          {menus.map(m => <NavLink key={m} href="#" $on={m === 'Tools'}>{m}</NavLink>)}
        </Nav>
        <WindowControls>
          <ToolButton $w={34} aria-label="minimize"><Icon n="min" /></ToolButton>
          <ToolButton $w={34} aria-label="restore"><Icon n="max" /></ToolButton>
          <ToolButton $w={32} aria-label="close"><Icon n="x" /></ToolButton>
        </WindowControls>
      </TitleBar>

      <Ribbon>
        <Panel title="Filter" caret pad={9}>
          <Col $w={261}>
            <Row $gap={6}><Icon n="scan" /><Field><select aria-label="Apply to"><option>Entire drawing</option></select><Caret dim over /></Field></Row>
            <Row $gap={6}><Icon n="shapes" /><Field><select aria-label="Object filter"><option></option></select><Caret dim over /></Field></Row>
            <Row $gap={12}><Small n="color" t="Color" /><Small n="layers" t="Layers" /><Small n="linetype" t="Linetype" caret /></Row>
          </Col>
          <Col>
            <Small n="block" t="Block Name" />
            <Small n="theight" t="Text Height" />
            <Small n="otype" t="Object Type" />
          </Col>
        </Panel>
        <Panel title="Select" caret pad={6}>
          <Big n="find" w={92} a="Find" b="and Replace" />
          <Big n="smart" w={54} a="Smart" b="Select" />
          <Col $ml={7} $w={183}>
            <Small n="quick" t="Quick Select" />
            <Small n="gsearch" t="Graphic Search" />
            <Small n="similar" t="Select Similar Objects" />
          </Col>
          <Col>
            <Small n="chain" t="Chain Select" />
            <Small n="invert" t="Invert Select" />
          </Col>
        </Panel>
        <Panel title="Group" launcher pad={7}>
          <Big n="group" w={74} a="Unnamed" b="Group" />
          <Big n="ungroup" w={72} a="UnGroup" />
          <Col $ml={1}>
            <IconBtn $on aria-label="Group selection"><Icon n="gsel1" /></IconBtn>
            <IconBtn $on aria-label="Group bounding box"><Icon n="gsel2" /></IconBtn>
            <IconBtn aria-label="Group edit"><Icon n="gsel3" /></IconBtn>
          </Col>
        </Panel>
        <Panel title="Measure" pad={14}>
          <Big n="distance" w={62} a="Distance" caret />
          <Col $w={46}>
            <IconBtn aria-label="Quick measure"><Icon n="measure" /></IconBtn>
            <IconBtn aria-label="Arc length"><Icon n="arcs" /></IconBtn>
            <IconBtn aria-label="Coordinates"><Icon n="coord" /></IconBtn>
          </Col>
          <Col $ml={3}>
            <Small n="area" t="Area" caret />
            <Small n="list" t="List" />
          </Col>
        </Panel>
        <Panel title="Check" center><Big n="check" w={90} a="Check Line" b="Connection" /></Panel>
        <Panel title="Collaboration" pad={6}>
          <Big n="fcompare" w={70} a="File" b="Compare" />
          <Big n="dcompare" w={70} a="Drawing" b="Compare" />
          <Col $ml={7} $w={145}>
            <Small n="lock" t="Lock Up Drawing" />
            <Small n="unlock" t="Unlock Drawing" />
          </Col>
          <Big n="sheet" w={70} a="New" b="Sheet Set" />
        </Panel>
        <Panel title="Customized Settings" caret pad={14}>
          <Big n="keycap" w={72} a="Shortcuts" />
          <Col $w={37}>
            {['cx', 'pgp', 'ltadd'].map(n => <IconBtn key={n} aria-label={n}><Icon n={n} /></IconBtn>)}
          </Col>
          <Col $w={37}>
            {['barcode', 'qr', 'doccode'].map(n => <IconBtn key={n} aria-label={n}><Icon n={n} /></IconBtn>)}
          </Col>
        </Panel>
        <Panel title="Palettes" caret pad={7}>
          <Big n="props" w={78} a="Properties" />
          <Big n="design" w={62} a="Design" b="Center" />
          <Big n="palettes" w={54} a="Tool" b="Palettes" />
        </Panel>
        <Panel title="Style Manager" caret pad={5}>
          <Big n="tstyle" w={56} a="Text" b="Style" />
          <Big n="ttable" w={54} a="Table" b="Style" />
          <Big n="tdim" w={78} a="Dimension" b="Style" />
        </Panel>
        <Panel title="Toolbar" center><Big n="toolbar" w={68} a="Toolbar" /></Panel>
        <Panel title="ZWCAD Toolbox" center><Big n="toolbox" w={68} a="Toolbox" on /></Panel>
      </Ribbon>

      <DocTabs>
        <ToolButton $w={18} aria-label="document list"><Icon n="tabs" /></ToolButton>
        <ToolButton as="span" $w={13}><Rule /></ToolButton>
        <DocTab>Drawing1</DocTab>
        <DocTab $on>Film*<Icon n="x" s={16} /></DocTab>
        <ToolButton $w={40} aria-label="new document"><Icon n="plus" /></ToolButton>
        <Rule />
      </DocTabs>

      <Canvas>
        <Model />
        <ViewLabels><span>[—]</span><span>[Top][2D Wireframe]</span><span>[WCS]</span></ViewLabels>
        <SideBar>
          {sideTools.map(n => <button key={n} aria-label={n}><Icon n={n} /></button>)}
        </SideBar>
        <Compass viewBox="0 0 130 130">
          <circle cx="65" cy="65" r="51" stroke="#263039" strokeWidth="13" strokeDasharray="56.100 24" strokeDashoffset="-12" />
          <g fill="#8b9094"><text x="65" y="22">N</text><text x="65" y="122">S</text><text x="13" y="72">W</text><text x="116" y="72">E</text></g>
          <rect x="39" y="39" width="52" height="52" rx="10" fill="#b4b6b6" />
          <rect x="49" y="48" width="32" height="34" fill="#a3a5a5" />
          <text x="65" y="68" fontSize="9" fontWeight="600" fill="#2f3336">TOP</text>
        </Compass>
        <CommandWindow>
          <History>
            <span>Select objects (points, lines, circles, arcs, elliptical arcs, polylines):</span>
            <span>Specify the base point:</span>
            <span>Specify the insertion point:</span>
          </History>
          <CommandLine>
            <Dimmed><Icon n="gear" /></Dimmed>
            <Icon n="prompt" />
            <input aria-label="Command" />
            <UpMark viewBox="0 0 11 7"><path d="M0 7h11L5.500 0z" /></UpMark>
          </CommandLine>
        </CommandWindow>
      </Canvas>

      <StatusBar>
        <Icon n="lines" />
        <LayoutTabs>
          <LayoutTab $on>Model</LayoutTab>
          <LayoutTab>Layout1</LayoutTab>
        </LayoutTabs>
        <Rule />
        <ToolButton $w={48} aria-label="new layout"><Icon n="plus" s={15} /></ToolButton>
        <Rule />
        <Modes>
          {modes.map(([n, on]) => <Mode key={n} $on={on} aria-label={n}><Icon n={n} /></Mode>)}
          <Mode aria-label="units format"><Icon n="units" /></Mode>
          <Units>Millimeters<Caret /></Units>
          {['anno', 'tree2', 'hex', 'full', 'ann2'].map(n => <Mode key={n} aria-label={n}><Icon n={n} /></Mode>)}
        </Modes>
      </StatusBar>

      <PlayButton aria-label="Play">
        <svg viewBox="0 0 252 252"><path d="M88 72L183 128 88 183z" fill="#fff" stroke="#fff" strokeWidth="18" strokeLinejoin="round" /></svg>
      </PlayButton>
    </App_>
  );
}
